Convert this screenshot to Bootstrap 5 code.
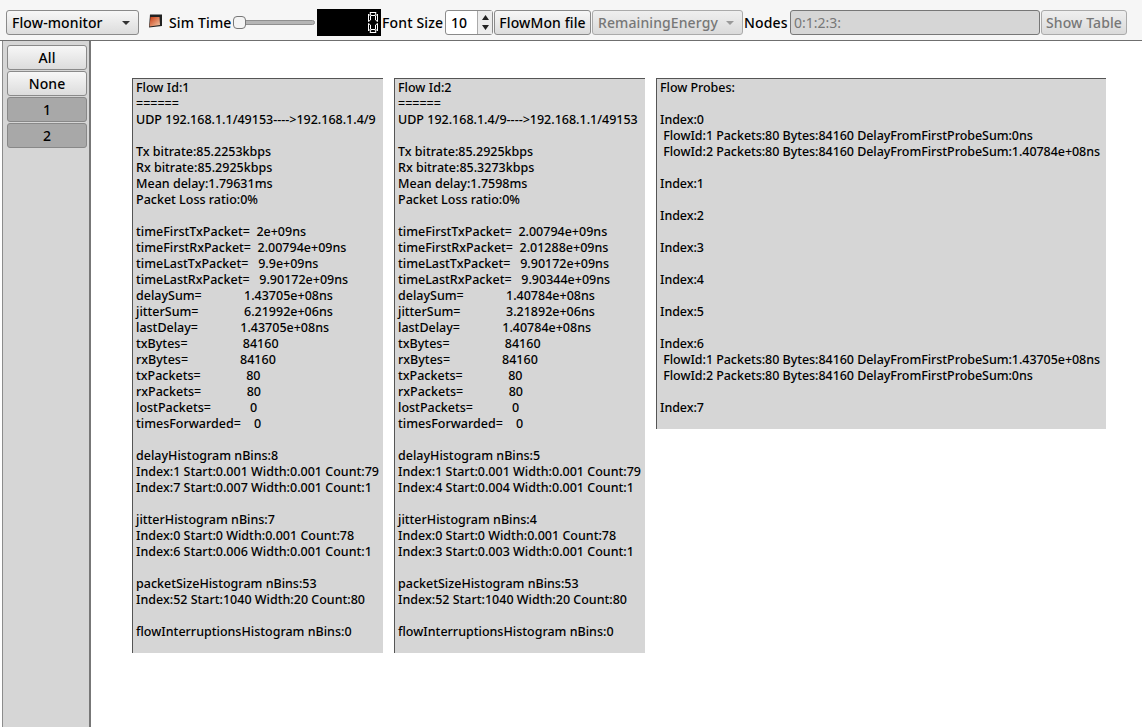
<!DOCTYPE html>
<html lang="en">
<head>
    <meta charset="UTF-8">
    <meta name="viewport" content="width=device-width, initial-scale=1.0">
    <title>Flow-monitor</title>
    <link href="https://cdn.jsdelivr.net/npm/bootstrap@5.3.0/dist/css/bootstrap.min.css" rel="stylesheet">
    <style>
        html, body { height: 100%; }
        body { background: #fff; color: #000; font-family: "Noto Sans", "Open Sans", sans-serif; font-size: 14px; overflow: hidden; }
        .top-bar { height: 41px; background: #f6f6f6; border-bottom: 1px solid #6f6f6f; padding: 10px 15px 0 6px; align-items: flex-start; }
        .qt-label { line-height: 25px; white-space: nowrap; font-weight: 500; letter-spacing: .15px; }
        .qt-btn { height: 25px; padding: 0; font-size: 14px; font-weight: 500; line-height: 22px; color: #000; border: 1px solid #8a8a8a; border-radius: 3px; background: linear-gradient(#f7f7f7, #dcdcdc); white-space: nowrap; letter-spacing: .1px; }
        .qt-btn:disabled { color: #777; opacity: 1; border-color: #aaa; background: linear-gradient(#efefef, #dadada); }
        .qt-combo { position: relative; text-align: left; padding-left: 5px; }
        .qt-combo::after { content: ""; position: absolute; right: 8px; top: 10px; border: 4px solid transparent; border-top: 4px solid #333; border-bottom: 0; }
        .qt-combo:disabled::after { border-top-color: #999; }
        .sim-slider { width: 82px; height: 25px; position: relative; margin: 0 2px; }
        .sim-slider::before { content: ""; position: absolute; left: 2px; right: 0; top: 10px; height: 5px; border-radius: 3px; background: #b5b5b5; border: 1px solid #8f8f8f; }
        .sim-slider::after { content: ""; position: absolute; left: 0; top: 6px; width: 13px; height: 13px; border-radius: 4px; background: #f4f4f4; border: 1px solid #777; }
        .lcd-box { width: 64px; height: 27px; margin-top: -1px; background: #000; padding: 3px 3px 0 0; }
        .spin-box { width: 48px; height: 25px; margin-left: 2px; background: #fff; border: 1px solid #8a8a8a; border-radius: 3px; }
        .spin-val { flex: 1; line-height: 23px; padding-left: 5px; font-weight: 500; }
        .spin-arrows { width: 15px; border-left: 1px solid #aaa; background: #ececec; }
        .nodes-input { width: 250px; height: 25px; background: #d6d6d6; border: 1px solid #777; border-radius: 3px; color: #777; line-height: 23px; padding-left: 3px; }
        .side-panel { width: 89px; margin-left: 2px; background: #d6d6d6; border-left: 1px solid #8c8c8c; border-right: 2px solid #777; padding: 4px 3px 0 4px; flex: none; }
        .flow-btn { width: 80px; height: 25px; display: block; margin-bottom: 1px; }
        .flow-on { background: #a8a8a8; border-color: #888; }
        .stats-area { padding: 37px 0 0 41px; gap: 11px; align-items: flex-start; }
        .flow-box { width: 251px; height: 575px; background: #d6d6d6; border-top: 1px solid #555; border-left: 1px solid #555; padding: 1px 0 0 3px; margin: 0; font-family: "Noto Sans", "Open Sans", sans-serif; font-size: 12.5px; line-height: 16px; font-weight: 500; white-space: pre; overflow: hidden; letter-spacing: 0; }
        .probe-box { width: 450px; height: 351px; letter-spacing: -.05px; }
    </style>
</head>
<body class="d-flex flex-column">
    <!-- Toolbar -->
    <div class="top-bar d-flex flex-shrink-0">
        <button class="qt-btn qt-combo" style="width:133px">Flow-monitor</button>
        <svg class="ms-2" width="16" height="16" viewBox="0 0 16 16" style="margin-top:3px">
            <defs><linearGradient id="playGrad" x1="0" y1="0" x2="1" y2="1"><stop offset="0" stop-color="#c93a10"/><stop offset="1" stop-color="#f3c9a8"/></linearGradient></defs>
            <path d="M3 1.5H15V13L2 14.5Z" fill="#222"/>
            <path d="M3.5 4H12.5L13 12L2.5 13.5Z" fill="url(#playGrad)"/>
        </svg>
        <span class="qt-label" style="margin-left:6px;width:62px">Sim Time</span>
        <div class="sim-slider"></div>
        <div class="lcd-box d-flex justify-content-end">
            <svg width="10" height="21" viewBox="0 0 10 21" fill="none" stroke="#fff" stroke-width="1">
                <path d="M2 .5H8L7 3.5H3ZM.5 2V9.5L2.5 8V4ZM9.5 2V9.5L7.5 8V4ZM.5 19V11.5L2.5 13V17ZM9.5 19V11.5L7.5 13V17ZM2 20.5H8L7 17.5H3Z"/>
            </svg>
        </div>
        <span class="qt-label" style="margin-left:1px;width:61px">Font Size</span>
        <div class="spin-box d-flex">
            <span class="spin-val">10</span>
            <div class="spin-arrows d-flex align-items-center justify-content-center">
                <svg width="9" height="17" viewBox="0 0 9 17"><path d="M4.5 1 8 6H1ZM4.5 16 1 11H8Z" fill="#222"/></svg>
            </div>
        </div>
        <button class="qt-btn" style="width:97px;margin-left:1px">FlowMon file</button>
        <button class="qt-btn qt-combo" style="width:151px;margin-left:1px" disabled>RemainingEnergy</button>
        <span class="qt-label" style="margin-left:1px;width:44px">Nodes</span>
        <div class="nodes-input" style="margin-left:2px">0:1:2:3:</div>
        <button class="qt-btn" style="width:86px;margin-left:1px" disabled>Show Table</button>
    </div>

    <div class="d-flex flex-grow-1">
        <!-- Flow selector -->
        <div class="side-panel">
            <button class="qt-btn flow-btn">All</button>
            <button class="qt-btn flow-btn">None</button>
            <button class="qt-btn flow-btn flow-on">1</button>
            <button class="qt-btn flow-btn flow-on">2</button>
        </div>

        <!-- Stats -->
        <div class="stats-area d-flex flex-grow-1">
<pre class="flow-box">Flow Id:1
======
UDP 192.168.1.1/49153----&gt;192.168.1.4/9

Tx bitrate:85.2253kbps
Rx bitrate:85.2925kbps
Mean delay:1.79631ms
Packet Loss ratio:0%

timeFirstTxPacket=  2e+09ns
timeFirstRxPacket=  2.00794e+09ns
timeLastTxPacket=   9.9e+09ns
timeLastRxPacket=   9.90172e+09ns
delaySum=             1.43705e+08ns
jitterSum=              6.21992e+06ns
lastDelay=             1.43705e+08ns
txBytes=                 84160
rxBytes=                84160
txPackets=              80
rxPackets=              80
lostPackets=            0
timesForwarded=    0

delayHistogram nBins:8
Index:1 Start:0.001 Width:0.001 Count:79
Index:7 Start:0.007 Width:0.001 Count:1

jitterHistogram nBins:7
Index:0 Start:0 Width:0.001 Count:78
Index:6 Start:0.006 Width:0.001 Count:1

packetSizeHistogram nBins:53
Index:52 Start:1040 Width:20 Count:80

flowInterruptionsHistogram nBins:0</pre>
<pre class="flow-box">Flow Id:2
======
UDP 192.168.1.4/9----&gt;192.168.1.1/49153

Tx bitrate:85.2925kbps
Rx bitrate:85.3273kbps
Mean delay:1.7598ms
Packet Loss ratio:0%

timeFirstTxPacket=  2.00794e+09ns
timeFirstRxPacket=  2.01288e+09ns
timeLastTxPacket=   9.90172e+09ns
timeLastRxPacket=   9.90344e+09ns
delaySum=             1.40784e+08ns
jitterSum=              3.21892e+06ns
lastDelay=             1.40784e+08ns
txBytes=                 84160
rxBytes=                84160
txPackets=              80
rxPackets=              80
lostPackets=            0
timesForwarded=    0

delayHistogram nBins:5
Index:1 Start:0.001 Width:0.001 Count:79
Index:4 Start:0.004 Width:0.001 Count:1

jitterHistogram nBins:4
Index:0 Start:0 Width:0.001 Count:78
Index:3 Start:0.003 Width:0.001 Count:1

packetSizeHistogram nBins:53
Index:52 Start:1040 Width:20 Count:80

flowInterruptionsHistogram nBins:0</pre>
<pre class="flow-box probe-box">Flow Probes:

Index:0
 FlowId:1 Packets:80 Bytes:84160 DelayFromFirstProbeSum:0ns
 FlowId:2 Packets:80 Bytes:84160 DelayFromFirstProbeSum:1.40784e+08ns

Index:1

Index:2

Index:3

Index:4

Index:5

Index:6
 FlowId:1 Packets:80 Bytes:84160 DelayFromFirstProbeSum:1.43705e+08ns
 FlowId:2 Packets:80 Bytes:84160 DelayFromFirstProbeSum:0ns

Index:7</pre>
        </div>
    </div>
    <script src="https://cdn.jsdelivr.net/npm/bootstrap@5.3.0/dist/js/bootstrap.bundle.min.js"></script>
</body>
</html>
